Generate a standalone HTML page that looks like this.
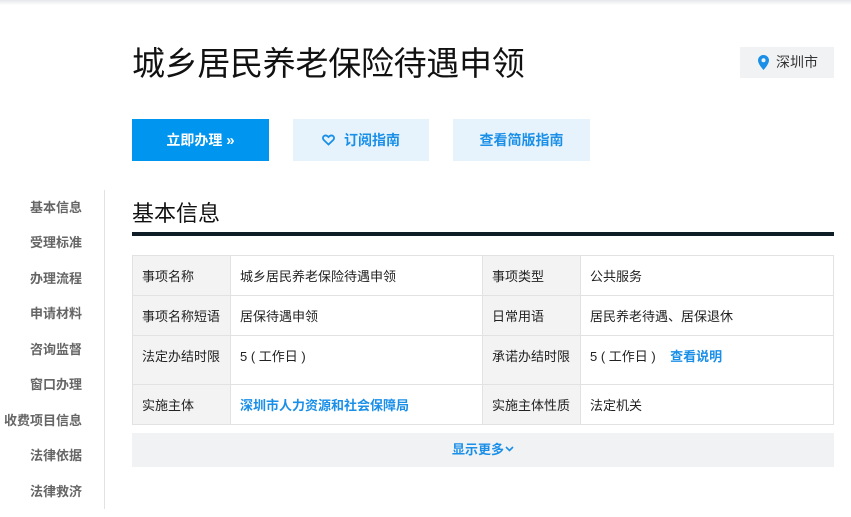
<!DOCTYPE html>
<html><head><meta charset="utf-8"><style>
*{margin:0;padding:0;box-sizing:border-box}
body{width:851px;height:517px;background:#fff;font-family:"Liberation Sans","Noto Sans CJK SC",sans-serif;position:relative;overflow:hidden;color:#333}
.a{position:absolute}
.top{left:0;top:0;width:851px;height:5px;background:linear-gradient(#e4e7eb,#f6f7f9 70%,#fff)}
h1{position:absolute;left:132px;top:42px;font-size:33px;font-weight:normal;color:#111;line-height:44px;letter-spacing:-0.3px}
.city{left:740px;top:47px;width:94px;height:31px;background:#f1f2f4;font-size:14px;line-height:31px;color:#333;padding-left:36px}
.btn{top:119px;height:42px;line-height:42px;font-size:14px;font-weight:bold;text-align:center}
.side{left:0;width:82px;text-align:right;font-size:13px;font-weight:bold;color:#666}
table{position:absolute;left:132px;top:255px;width:702px;border-collapse:collapse;font-size:13px;color:#222;table-layout:fixed}
td{border:1px solid #e2e2e2;padding:0 0 0 9px;vertical-align:top;padding-top:10px;white-space:nowrap;overflow:hidden}
td.l{background:#f3f3f3}
.blue{color:#1a8fe8;font-weight:bold}
</style></head><body>
<div class="a top"></div>
<h1>城乡居民养老保险待遇申领</h1>
<div class="a city"><svg class="a" style="left:18px;top:8px" width="11" height="15" viewBox="0 0 11 15"><path d="M5.5 0C2.5 0 0 2.4 0 5.4 0 9.2 5.5 15 5.5 15S11 9.2 11 5.4C11 2.4 8.5 0 5.5 0z" fill="#1a8fe8"/><circle cx="5.5" cy="5.3" r="2" fill="#f1f2f4"/></svg>深圳市</div>
<div class="a btn" style="left:132px;width:137px;background:#0096f0;color:#fff">立即办理 <span style="font-size:15px">»</span></div>
<div class="a btn" style="left:293px;width:136px;background:#e7f3fc;color:#1a8fe8"><svg width="13" height="12" viewBox="0 0 13 12" style="vertical-align:-1px;margin-right:9px"><path d="M6.5 10.5L1.8 6C0.5 4.7 0.7 2.6 2.2 1.8 3.6 1 5.2 1.6 6.5 3 7.8 1.6 9.4 1 10.8 1.8 12.3 2.6 12.5 4.7 11.2 6z" fill="none" stroke="#1a8fe8" stroke-width="1.8"/></svg>订阅指南</div>
<div class="a btn" style="left:453px;width:137px;background:#e7f3fc;color:#1a8fe8">查看简版指南</div>
<div class="a" style="left:132px;top:196px;font-size:22px;color:#111">基本信息</div>
<div class="a" style="left:132px;top:232px;width:702px;height:4px;background:#0f1e26"></div>
<div class="a" style="left:104px;top:190px;width:1px;height:319px;background:#e2e2e2"></div>
<div class="a side" style="top:197px">基本信息</div>
<div class="a side" style="top:232px">受理标准</div>
<div class="a side" style="top:268px">办理流程</div>
<div class="a side" style="top:303px">申请材料</div>
<div class="a side" style="top:339px">咨询监督</div>
<div class="a side" style="top:374px">窗口办理</div>
<div class="a side" style="top:410px">收费项目信息</div>
<div class="a side" style="top:445px">法律依据</div>
<div class="a side" style="top:481px">法律救济</div>
<table>
<colgroup><col style="width:98px"><col style="width:252px"><col style="width:98px"><col></colgroup>
<tr style="height:40px"><td class="l">事项名称</td><td>城乡居民养老保险待遇申领</td><td class="l">事项类型</td><td>公共服务</td></tr>
<tr style="height:40px"><td class="l">事项名称短语</td><td>居保待遇申领</td><td class="l">日常用语</td><td>居民养老待遇、居保退休</td></tr>
<tr style="height:49px"><td class="l">法定办结时限</td><td>5 ( 工作日 )</td><td class="l">承诺办结时限</td><td>5 ( 工作日 ) &nbsp;&nbsp;&nbsp;<span class="blue">查看说明</span></td></tr>
<tr style="height:40px"><td class="l">实施主体</td><td class="blue">深圳市人力资源和社会保障局</td><td class="l">实施主体性质</td><td>法定机关</td></tr>
</table>
<div class="a" style="left:132px;top:433px;width:702px;height:34px;background:#f1f2f4;text-align:center;line-height:34px;font-size:13px" ><span class="blue">显示更多<svg width="9" height="6" viewBox="0 0 9 6" style="vertical-align:2px;margin-left:1px"><path d="M1 1l3.5 3.5L8 1" fill="none" stroke="#1a8fe8" stroke-width="1.6"/></svg></span></div>
</body></html>
